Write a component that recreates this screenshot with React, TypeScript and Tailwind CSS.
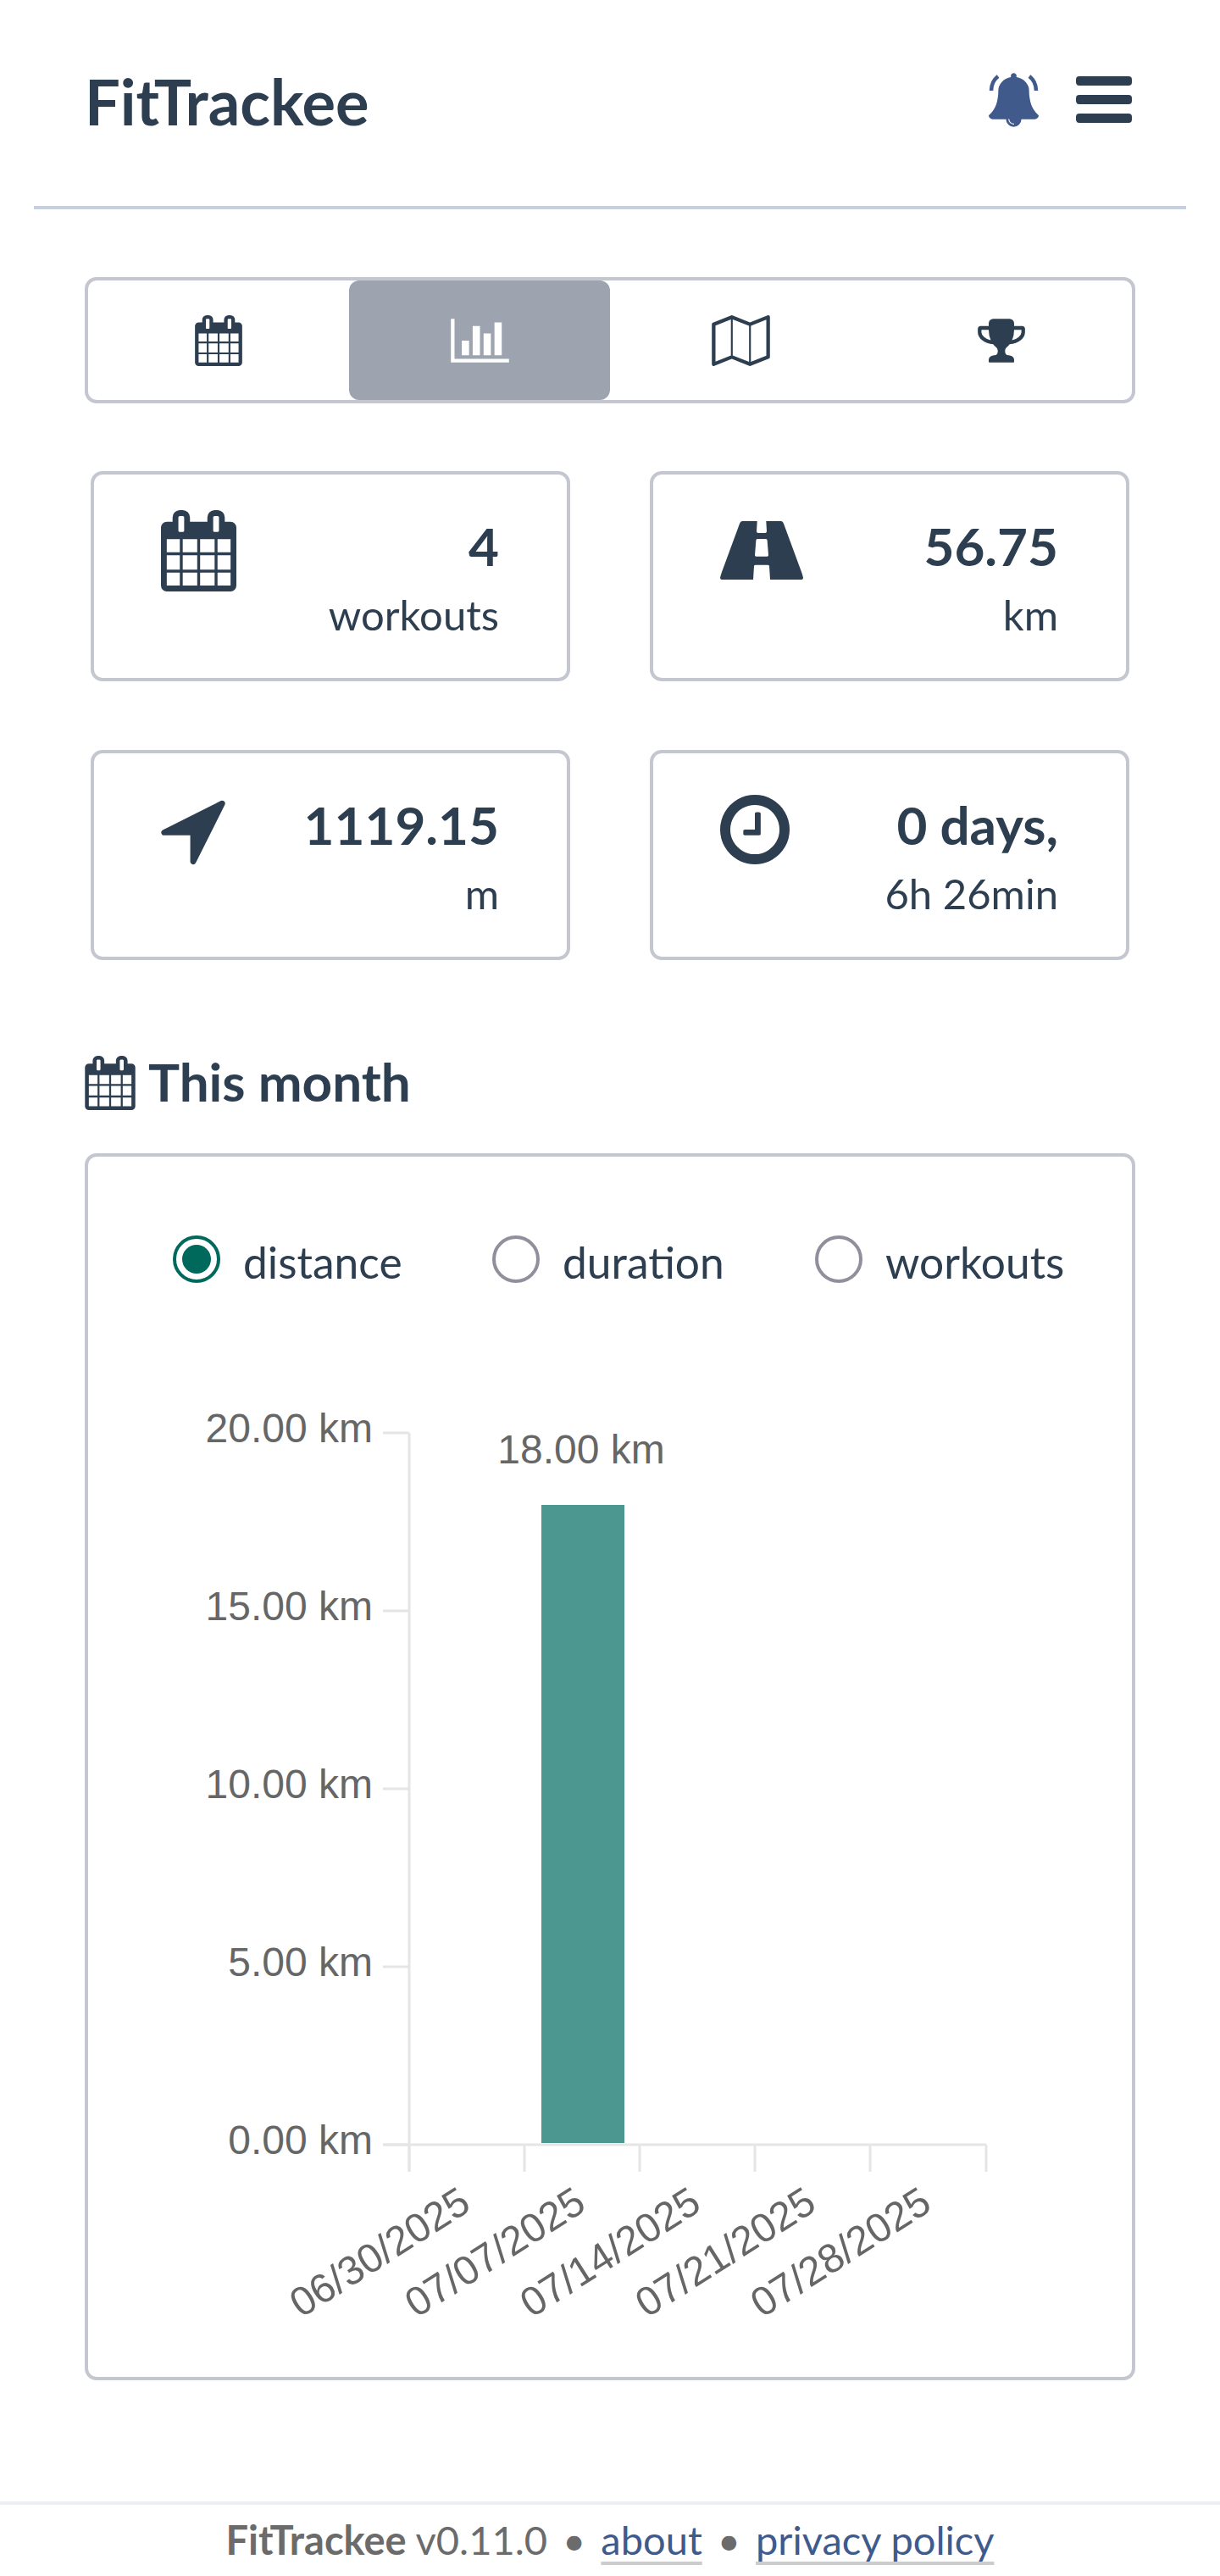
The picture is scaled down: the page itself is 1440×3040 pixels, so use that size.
const CALENDAR =
  'M192 1664h288v-288h-288v288zm352 0h320v-288h-320v288zm-352-352h288v-320h-288v320zm352 0h320v-320h-320v320zm-352-384h288v-288h-288v288zm736 736h320v-288h-320v288zm-384-736h320v-288h-320v288zm768 736h288v-288h-288v288zm-384-352h320v-320h-320v320zm-352-864v-288q0-13-9.5-22.5t-22.5-9.5h-64q-13 0-22.5 9.5t-9.5 22.5v288q0 13 9.5 22.5t22.5 9.5h64q13 0 22.5-9.5t9.5-22.5zm736 864h288v-320h-288v320zm-384-384h320v-288h-320v288zm384 0h288v-288h-288v288zm32-480v-288q0-13-9.5-22.5t-22.5-9.5h-64q-13 0-22.5 9.5t-9.5 22.5v288q0 13 9.5 22.5t22.5 9.5h64q13 0 22.5-9.5t9.5-22.5zm384-64v1280q0 52-38 90t-90 38h-1408q-52 0-90-38t-38-90v-1280q0-52 38-90t90-38h128v-96q0-66 47-113t113-47h64q66 0 113 47t47 113v96h384v-96q0-66 47-113t113-47h64q66 0 113 47t47 113v96h128q52 0 90 38t38 90z';
const BELL =
  'M912 1696q0-16-16-16-59 0-101.5-42.5t-42.5-101.5q0-16-16-16t-16 16q0 73 51.5 124.5t124.5 51.5q16 0 16-16zm816-288q0 52-38 90t-90 38h-448q0 106-75 181t-181 75-181-75-75-181h-448q-52 0-90-38t-38-90q50-42 91-88t85-119.5 74.5-158.5 50-206 19.5-260q0-152 117-282.5t307-158.5q-8-19-8-39 0-40 28-68t68-28 68 28 28 68q0 20-8 39 190 28 307 158.5t117 282.5q0 139 19.5 260t50 206 74.5 158.5 85 119.5 91 88z';
const ROAD =
  'M26 0H43.7L43 12Q43 14 45 14H53Q55 14 55 12L54.3 0H72Q74 0 75 3L96 60Q98 66 98 67Q98 69 96 69H59L58 53Q58 51.7 56 51.7H42Q40 51.7 40 53L39 69H2Q0 69 0 67Q0 66 2 60L23 3Q24 0 26 0ZM44 21H54Q55.5 21 55.6 22.5L57 40Q57 41.7 55.5 41.7H42.5Q41 41.7 41 40L42.4 22.5Q42.5 21 44 21Z';
const ARROW =
  'M1593 349l-640 1280q-17 35-57 35-5 0-15-2-22-5-35.5-22.5t-13.5-39.5v-576h-576q-22 0-39.5-13.5t-22.5-35.5 4-42 29-30l1280-640q13-7 29-7 27 0 45 19 15 14 18.5 34.5t-6.5 39.5z';
const CLOCK =
  'M1024 544v448q0 14-9 23t-23 9h-320q-14 0-23-9t-9-23v-64q0-14 9-23t23-9h224v-352q0-14 9-23t23-9h64q14 0 23 9t9 23zm416 352q0-148-73-273t-198-198-273-73-273 73-198 198-73 273 73 273 198 198 273 73 273-73 198-198 73-273zm224 0q0 209-103 385.5t-279.5 279.5-385.5 103-385.5-103-279.5-279.5-103-385.5 103-385.5 279.5-279.5 385.5-103 385.5 103 279.5 279.5 103 385.5z';
const TROPHY =
  'M522 883q-74-162-74-371h-256v96q0 78 94.5 162t235.5 113zm1078-275v-96h-256q0 209-74 371 141-29 235.5-113t94.5-162zm128-128v128q0 71-41.5 143t-112 130-173 97.5-215.5 44.5q-42 54-95 95-38 34-52.5 72.5t-14.5 89.5q0 54 30.5 91t97.5 37q75 0 133.5 45.5t58.5 114.5v64q0 14-9 23t-23 9h-832q-14 0-23-9t-9-23v-64q0-69 58.5-114.5t133.5-45.5q67 0 97.5-37t30.5-91q0-51-14.5-89.5t-52.5-72.5q-53-41-95-95-113-5-215.5-44.5t-173-97.5-112-130-41.5-143v-128q0-40 28-68t68-28h288v-96q0-66 47-113t113-47h576q66 0 113 47t47 113v96h288q40 0 68 28t28 68z';
const BARS =
  'M640 896v512h-256v-512h256zm384-512v1024h-256v-1024h256zm1024 1152v128h-2048v-1536h128v1408h1920zm-640-896v768h-256v-768h256zm384-384v1152h-256v-1152h256z';
const MAP =
  'M2020 11q28 20 28 53v1408q0 20-11 36t-29 23l-640 256q-24 11-48 0l-616-246-616 246q-10 5-24 5-19 0-36-11-28-20-28-53v-1408q0-20 11-36t29-23l640-256q24-11 48 0l616 246 616-246q32-13 60 6zm-1284 135v1270l576 230v-1270zm-608 217v1270l544-217v-1270zm1792 1066v-1270l-544 217v1270z';

const Glyph = ({ d, box, className }: { d: string; box: string; className: string }) => (
  <svg viewBox={box} className={className} fill="currentColor" fillRule="evenodd" aria-hidden="true">
    <path d={d} />
  </svg>
);

const stats = [
  { d: CALENDAR, box: '64 0 1664 1792', w: 'w-[89px]', value: '4', unit: 'workouts' },
  { d: ROAD, box: '0 -13 98 96', w: 'w-[98px]', value: '56.75', unit: 'km' },
  { d: ARROW, box: '192 0 1408 1792', w: 'w-[76px]', value: '1119.15', unit: 'm' },
  { d: CLOCK, box: '128 0 1536 1792', w: 'w-[82px]', value: '0 days,', unit: '6h 26min' },
];

const yTicks = [
  { y: 1690, label: '20.00 km' },
  { y: 1900, label: '15.00 km' },
  { y: 2110, label: '10.00 km' },
  { y: 2320, label: '5.00 km' },
  { y: 2530, label: '0.00 km' },
];
const xTicks = [483, 619, 755, 891, 1027, 1164];
const xLabels = ['06/30/2025', '07/07/2025', '07/14/2025', '07/21/2025', '07/28/2025'];

const Chart = () => (
  <svg viewBox="104 1540 1232 1264" className="mt-[18px] block h-[1264px] w-[1232px]">
    <g stroke="#e5e5e5" strokeWidth="3">
      <line x1="483" y1="1690" x2="483" y2="2562" />
      <line x1="452" y1="2530" x2="1164" y2="2530" />
      {yTicks.map((t) => (
        <line key={t.y} x1="452" y1={t.y} x2="483" y2={t.y} />
      ))}
      {xTicks.map((x) => (
        <line key={x} x1={x} y1="2530" x2={x} y2="2562" />
      ))}
    </g>
    <rect x="639" y="1775" width="98" height="753" fill="#4d9791" />
    <g fill="#666666" fontFamily="'Liberation Sans', Arial, sans-serif" fontSize="48">
      {yTicks.map((t) => (
        <text key={t.y} x="440" y={t.y + 11} textAnchor="end">
          {t.label}
        </text>
      ))}
      <text x="686" y="1726" textAnchor="middle">
        18.00 km
      </text>
      {xLabels.map((label, i) => (
        <text
          key={label}
          x={558 + i * 136}
          y="2606"
          textAnchor="end"
          transform={`rotate(-32.5 ${558 + i * 136} 2606)`}
        >
          {label}
        </text>
      ))}
    </g>
  </svg>
);

const Radio = ({ label, checked }: { label: string; checked?: boolean }) => (
  <label className="flex items-start gap-[27px]">
    <span
      className={
        checked
          ? 'flex h-[56px] w-[56px] items-center justify-center rounded-full border-[4px] border-[#00695c]'
          : 'h-[56px] w-[56px] rounded-full border-[4px] border-[#8f8f9d]'
      }
    >
      {checked && <span className="h-[34px] w-[34px] rounded-full bg-[#00695c]" />}
    </span>
    <span className="mt-[-3px] text-[51.5px] leading-[68px]">{label}</span>
  </label>
);

export default function App() {
  return (
    <div className="flex h-[3040px] w-[1440px] flex-col overflow-hidden bg-white font-['Lato','Liberation_Sans',sans-serif] text-[#2c3e50]">
      <header className="mx-10 flex h-[247px] items-center justify-between border-b-[4px] border-[#c4cfdf] pb-[8px] pl-[60px] pr-[64px]">
        <div className="mt-[4px] text-[74px] font-bold leading-none">FitTrackee</div>
        <div className="flex items-center gap-[44px]">
          <svg viewBox="0 0 59 64" className="h-[64px] w-[59px] text-[#405a8c]" aria-hidden="true">
            <svg width="59" height="64" viewBox="64 0 1664 1792" fill="currentColor">
              <path d={BELL} />
            </svg>
            <path
              d="M3 21C3 13 6 8 11 4M56 21C56 13 53 8 48 4"
              fill="none"
              stroke="currentColor"
              strokeWidth="4.5"
            />
          </svg>
          <div className="flex w-[66px] flex-col gap-[11px]">
            <span className="h-[11px] rounded-[4px] bg-[#2c3e50]" />
            <span className="h-[11px] rounded-[4px] bg-[#2c3e50]" />
            <span className="h-[11px] rounded-[4px] bg-[#2c3e50]" />
          </div>
        </div>
      </header>

      <main className="mx-[100px] mt-[80px]">
        <nav className="flex h-[149px] rounded-[14px] border-[4px] border-[#c4c7cf]">
          <div className="flex flex-1 items-center justify-center">
            <Glyph d={CALENDAR} box="64 0 1664 1792" className="h-[60px] w-[56px]" />
          </div>
          <div className="flex flex-1 items-center justify-center rounded-[12px] bg-[#9da3af] text-white">
            <Glyph d={BARS} box="0 0 2048 1792" className="h-[60px] w-[69px]" />
          </div>
          <div className="flex flex-1 items-center justify-center">
            <Glyph d={MAP} box="0 0 2048 1792" className="h-[60px] w-[69px]" />
          </div>
          <div className="flex flex-1 items-center justify-center">
            <Glyph d={TROPHY} box="64 0 1664 1792" className="h-[60px] w-[56px]" />
          </div>
        </nav>

        <section className="mt-[80px] grid grid-cols-2 gap-x-[94px] gap-y-[81px] px-[7px]">
          {stats.map((s) => (
            <div
              key={s.value}
              className="flex h-[248px] justify-between rounded-[14px] border-[4px] border-[#c4c7cf] pl-[79px] pr-[80px] pt-[42px]"
            >
              <Glyph d={s.d} box={s.box} className={`h-[96px] ${s.w}`} />
              <div className="flex flex-col items-end">
                <span className="mt-[4px] text-[62px] font-bold leading-[76px]">{s.value}</span>
                <span className="mt-[1px] text-[49px] leading-[84px]">{s.unit}</span>
              </div>
            </div>
          ))}
        </section>

        <h2 className="mt-[113px] flex h-[64px] items-center gap-[15px] text-[62px] font-bold leading-none">
          <Glyph d={CALENDAR} box="64 0 1664 1792" className="h-[64px] w-[60px]" />
          <span className="mt-[-4px]">This month</span>
        </h2>

        <section className="mt-[51px] h-[1448px] rounded-[14px] border-[4px] border-[#c4c7cf]">
          <div className="grid grid-cols-[377px_381px_auto] pl-[100px] pt-[93px]">
            <Radio label="distance" checked />
            <Radio label="duration" />
            <Radio label="workouts" />
          </div>
          <Chart />
        </section>
      </main>

      <footer className="mt-auto flex h-[88px] items-center justify-center gap-[18px] border-t-[4px] border-[#ebeef3] pb-[2px] text-[47px] text-[#6b6b6b]">
        <span>
          <strong className="font-bold">FitTrackee</strong> v0.11.0
        </span>
        <span>•</span>
        <a className="text-[#3f5a8c] underline decoration-[#cccccc] decoration-4 underline-offset-[8px]">about</a>
        <span>•</span>
        <a className="text-[#3f5a8c] underline decoration-[#cccccc] decoration-4 underline-offset-[8px]">privacy policy</a>
      </footer>
    </div>
  );
}
